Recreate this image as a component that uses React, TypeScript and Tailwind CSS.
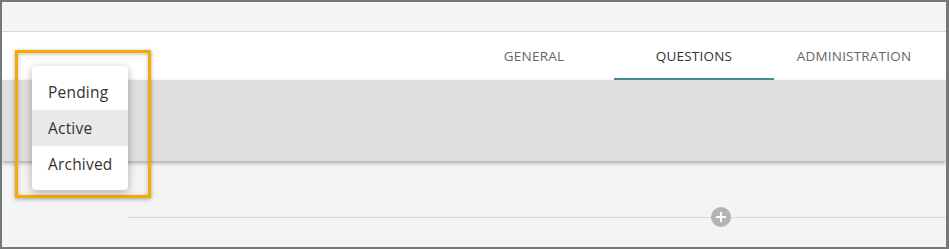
import React from "react";

export default function App() {
  const font = { fontFamily: '"Open Sans", "Noto Sans", sans-serif' };
  return (
    <div
      className="relative w-[949px] h-[249px] overflow-hidden border-l-2 border-t-2 border-b-2 border-r-[3px] border-[#777777] bg-[#f4f4f4] flex flex-col"
      style={font}
    >
      <div className="h-[30px] shrink-0 bg-[#f5f5f5] border-b border-[#d3d6e4]" />
      <div className="h-[48px] shrink-0 bg-white flex justify-end pr-[12px]">
        <div className="w-[160px] flex items-center justify-center text-[13.5px] text-[#666666] tracking-[0.2px]">
          GENERAL
        </div>
        <div className="w-[160px] flex items-center justify-center text-[13.5px] text-[#333333] border-b-2 border-[#4a8e99] pt-[2px] tracking-[0.2px]">
          QUESTIONS
        </div>
        <div className="w-[160px] flex items-center justify-center text-[13.5px] text-[#666666] tracking-[0.2px]">
          ADMINISTRATION
        </div>
      </div>
      <div className="h-[81px] shrink-0 bg-[#dfdfdf] shadow-[0_2px_4px_rgba(0,0,0,0.3)] relative z-10" />
      <div className="flex-1 relative">
        <div className="absolute left-[125px] right-0 top-[56px] border-t border-[#d6d6d6]" />
        <div className="absolute left-[709px] top-[46px] w-[20px] h-[20px] rounded-full bg-[#b3b3b3] flex items-center justify-center">
          <svg width="12" height="12" viewBox="0 0 12 12">
            <rect x="5" y="1" width="2" height="10" fill="white" />
            <rect x="1" y="5" width="10" height="2" fill="white" />
          </svg>
        </div>
      </div>

      <div className="absolute left-[13px] top-[48px] w-[136px] h-[148px] border-[3px] border-[#f6ab00] shadow-[0_1px_4px_rgba(0,0,0,0.35),inset_0_1px_4px_rgba(0,0,0,0.25)] z-20" />
      <div className="absolute left-[30px] top-[64px] w-[96px] rounded-[4px] bg-white py-[8px] shadow-[0_2px_8px_rgba(0,0,0,0.3)] z-30">
        <div className="h-[36px] flex items-center pl-[16px] pt-[2px] text-[15.5px] text-[#333333] tracking-[0.2px]">Pending</div>
        <div className="h-[36px] flex items-center pl-[16px] pt-[2px] text-[15.5px] text-[#333333] tracking-[0.2px] bg-[#e9e9e9]">Active</div>
        <div className="h-[36px] flex items-center pl-[16px] pt-[2px] text-[15.5px] text-[#333333] tracking-[0.2px]">Archived</div>
      </div>
    </div>
  );
}
